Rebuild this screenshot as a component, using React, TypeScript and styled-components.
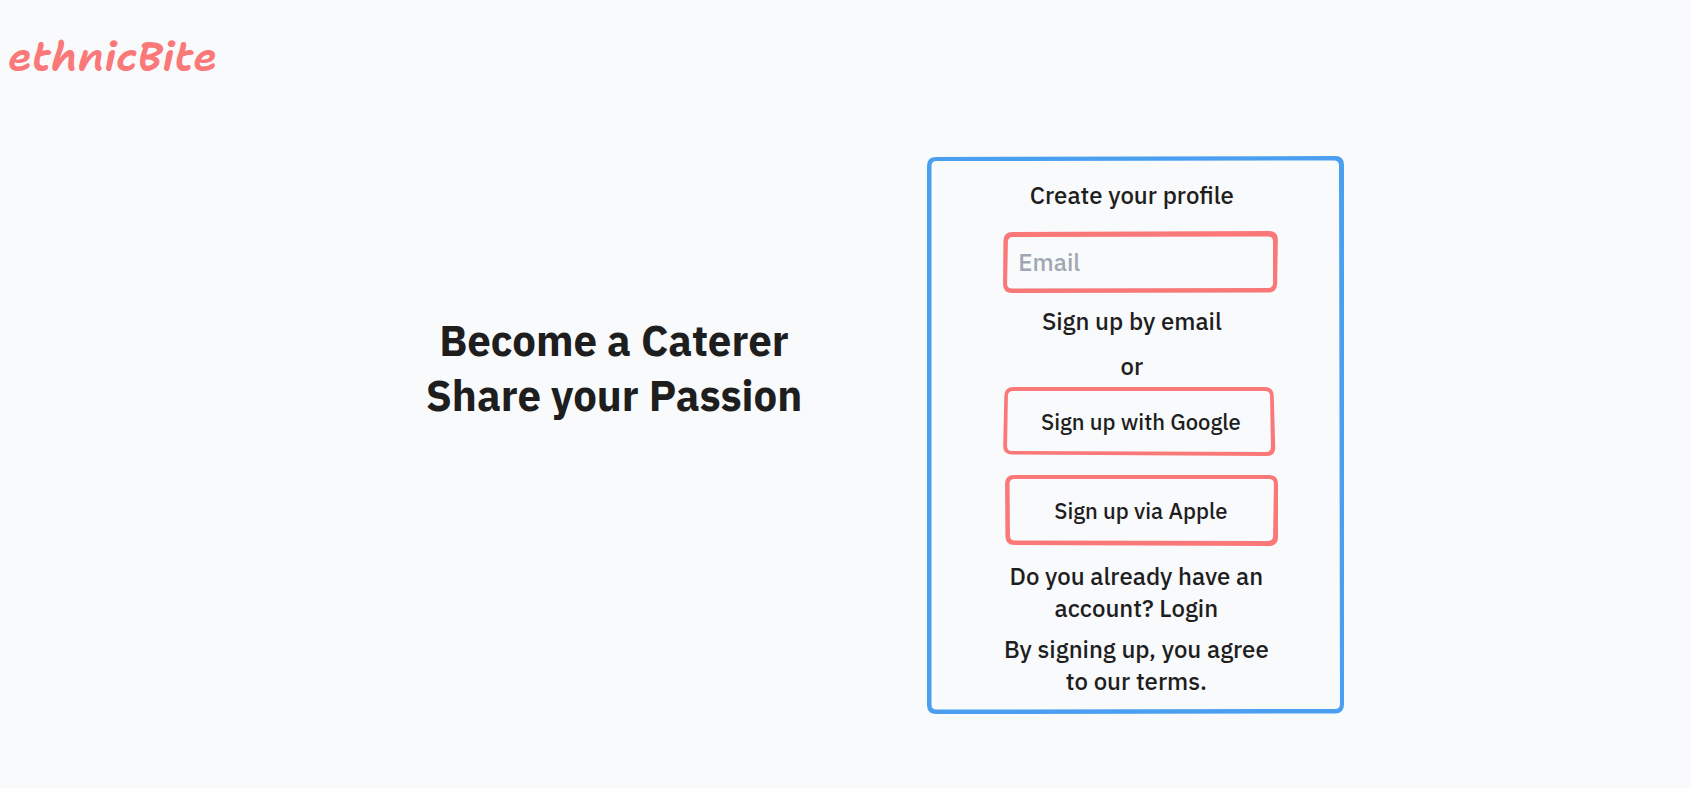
import React from 'react';
import styled, { createGlobalStyle } from 'styled-components';

const colors = {
  page: '#f9fafc',
  ink: '#1e1e1e',
  coral: '#fa7878',
  blue: '#4a9ff0',
  muted: '#9fa8b2',
};

const GlobalStyle = createGlobalStyle`
  *, *::before, *::after { box-sizing: border-box; }
  body {
    margin: 0;
    background: ${colors.page};
    color: ${colors.ink};
    font-family: 'IBM Plex Sans', Roboto, sans-serif;
  }
`;

type Point = [number, number];

// Closed outline through the given corners, each one rounded by the radius.
const roundedOutline = (points: Point[], radius: number) =>
  points
    .map((corner, i) => {
      const toward = (target: Point): Point => {
        const dx = target[0] - corner[0];
        const dy = target[1] - corner[1];
        const length = Math.hypot(dx, dy);
        return [corner[0] + (dx / length) * radius, corner[1] + (dy / length) * radius];
      };
      const start = toward(points[(i + points.length - 1) % points.length]);
      const end = toward(points[(i + 1) % points.length]);
      return `${i ? 'L' : 'M'}${start} Q${corner} ${end}`;
    })
    .join(' ') + ' Z';

interface Sketch {
  size: Point;
  outer: Point[];
  inner: Point[];
}

const sketches: Record<'card' | 'email' | 'google' | 'apple', Sketch> = {
  card: {
    size: [417, 559],
    outer: [[0, 1], [417, 0], [417, 558.5], [0, 559]],
    inner: [[4.5, 5], [412, 4.5], [413, 554], [4.5, 554.5]],
  },
  email: {
    size: [275, 62],
    outer: [[0.5, 1], [275, 0], [274, 61.5], [0, 62]],
    inner: [[5, 6], [270, 5.5], [270, 57], [4, 57.5]],
  },
  google: {
    size: [275, 69],
    outer: [[1.5, 0], [270.5, 0], [272.5, 69], [0, 67.5]],
    inner: [[5, 4], [267, 4], [268, 65], [4, 64]],
  },
  apple: {
    size: [275, 71],
    outer: [[2, 0], [275, 0], [275, 71], [2.5, 70]],
    inner: [[6.5, 4], [271, 4], [270, 66], [7, 65.5]],
  },
};

const FrameDrawing = styled.svg`
  position: absolute;
  inset: 0;
  width: 100%;
  height: 100%;
  pointer-events: none;
`;

const Frame = ({ sketch, color }: { sketch: Sketch; color: string }) => (
  <FrameDrawing
    viewBox={`0 0 ${sketch.size[0]} ${sketch.size[1]}`}
    preserveAspectRatio="none"
    aria-hidden="true"
  >
    <path
      fill={color}
      fillRule="evenodd"
      d={`${roundedOutline(sketch.outer, 9)} ${roundedOutline(sketch.inner, 5)}`}
    />
  </FrameDrawing>
);

const Header = styled.header`
  padding: 27px 8px 0;
`;

const Logo = styled.a`
  display: inline-block;
  color: ${colors.coral};
  font: italic 600 41px/60px 'Shantell Sans', 'Noto Sans', sans-serif;
  text-decoration: none;
`;

const Main = styled.main`
  display: flex;
  flex-wrap: wrap;
  align-items: flex-start;
  justify-content: center;
  gap: 40px 125px;
  padding: 69px 0 40px 79px;
`;

const Heading = styled.h1`
  margin: 0;
  padding-top: 157px;
  font-size: 42px;
  font-weight: 700;
  line-height: 55px;
  text-align: center;
`;

const Card = styled.form`
  position: relative;
  display: flex;
  flex-direction: column;
  width: 417px;
  padding: 23px 66px 17px 76px;
`;

const Line = styled.p<{ $gap: number }>`
  margin: ${({ $gap }) => $gap}px 0 0;
  padding-right: 18px;
  font-size: 24px;
  font-weight: 500;
  line-height: 32px;
  text-align: center;
`;

const Title = styled(Line).attrs({ as: 'h2' })``;

const Note = styled(Line)`
  padding-right: 9px;
  white-space: nowrap;
`;

const PlainButton = styled.button`
  padding: 0;
  border: 0;
  background: none;
  color: inherit;
  font: inherit;
  cursor: pointer;
`;

const TextLink = styled.a`
  color: inherit;
  text-decoration: none;
`;

const Box = styled.div<{ $gap: number; $height: number }>`
  position: relative;
  display: flex;
  height: ${({ $height }) => $height}px;
  margin-top: ${({ $gap }) => $gap}px;
`;

const EmailInput = styled.input`
  width: 100%;
  padding: 0 15px;
  border: 0;
  background: none;
  color: inherit;
  font: inherit;
  font-size: 24px;
  font-weight: 500;

  &::placeholder {
    color: ${colors.muted};
    opacity: 1;
  }
`;

const ProviderButton = styled(PlainButton)`
  width: 100%;
  font-size: 22px;
  font-weight: 500;
`;

export default function App() {
  return (
    <>
      <GlobalStyle />
      <Header>
        <Logo href="#">ethnicBite</Logo>
      </Header>
      <Main>
        <Heading>
          Become a Caterer
          <br />
          Share your Passion
        </Heading>
        <Card onSubmit={(event) => event.preventDefault()}>
          <Frame sketch={sketches.card} color={colors.blue} />
          <Title $gap={0}>Create your profile</Title>
          <Box $gap={20} $height={62}>
            <Frame sketch={sketches.email} color={colors.coral} />
            <EmailInput type="email" placeholder="Email" aria-label="Email" />
          </Box>
          <Line $gap={12}>
            <PlainButton type="submit">Sign up by email</PlainButton>
          </Line>
          <Line $gap={13}>or</Line>
          <Box $gap={5} $height={69}>
            <Frame sketch={sketches.google} color={colors.coral} />
            <ProviderButton type="button">Sign up with Google</ProviderButton>
          </Box>
          <Box $gap={19} $height={71}>
            <Frame sketch={sketches.apple} color={colors.coral} />
            <ProviderButton type="button">Sign up via Apple</ProviderButton>
          </Box>
          <Note $gap={14}>
            Do you already have an
            <br />
            account? <TextLink href="#login">Login</TextLink>
          </Note>
          <Note $gap={9}>
            By signing up, you agree
            <br />
            to our <TextLink href="#terms">terms.</TextLink>
          </Note>
        </Card>
      </Main>
    </>
  );
}
